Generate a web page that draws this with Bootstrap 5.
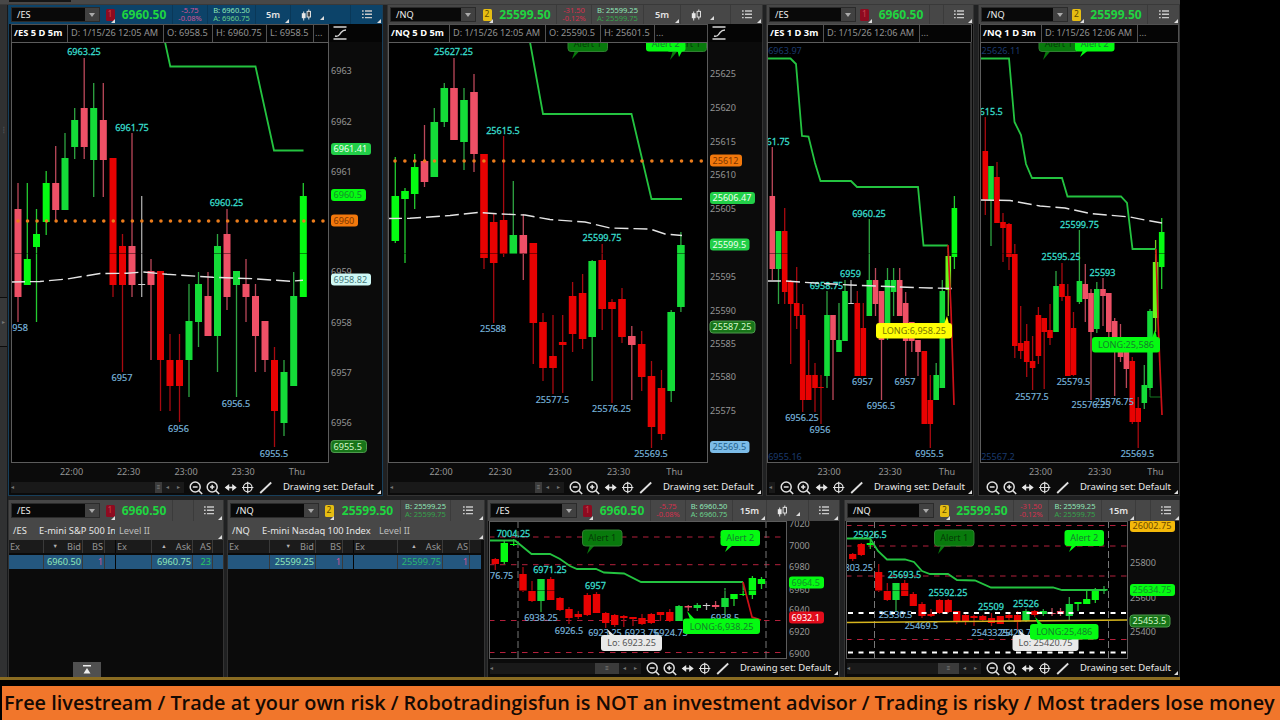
<!DOCTYPE html>
<html lang="en">
<head>
<meta charset="utf-8">
<meta name="viewport" content="width=device-width, initial-scale=1">
<title>Futures workspace</title>
<link href="https://cdn.jsdelivr.net/npm/bootstrap@5.3.0/dist/css/bootstrap.min.css" rel="stylesheet">
<style>
body{background:#000;font-family:"Noto Sans","Open Sans",sans-serif;font-size:9.2px;line-height:1;width:1280px;height:720px;overflow:hidden;color:#d8d8d8}
svg{display:block;flex:none}
.workspace{width:1180px;height:680px;background:#202122;border-bottom:3px solid #8a6c22}
.topstrip{height:5px;background:#484848;border-bottom:1px solid #393939}
.topstrip i{width:62px;height:2px;margin-left:9px;background:#151515}
.main-row{height:495px;display:grid;grid-template-columns:8px 377px 380px 213px 202px}
.low-row{height:177px;display:grid;grid-template-columns:8px 219px 260px 357px 336px}
.gutter{background:#303132;border-right:1px solid #17191b;color:#777;font-size:6px}
.gutter .grip{height:10px;margin-top:122px}
.gutter .handle{height:50px;margin-top:160px;border-top:1px solid #0c0c0c;border-bottom:1px solid #0c0c0c;background:#373839}
.pane{background:#0b0b0b;height:491px;border:1px solid #333;border-top:0;position:relative;overflow:hidden}
.pane.on{border-color:#173f5b}
.low-row .pane{height:177px;border-bottom:0}
.pA{width:375px}.pB{width:376px;margin-left:2px}.pC{width:208px;margin-left:1px}.pD{width:202px}
.pE{width:216px}.pF{width:258px}.pG{width:353px}.pH{width:336px}
.tools{display:grid;height:19px;background:#474747}
.on .tools{background:#0c4369}
.low-row .tools{height:21px}
.tools>*{position:relative;display:flex;align-items:center;justify-content:center;border-right:1px solid rgba(0,0,0,.16)}
.tA{grid-template-columns:93px 14px 57px 35px 48px 35px 60px 31px}
.tB{grid-template-columns:90px 16px 63px 35px 52px 37px 50px 31px}
.tC{grid-template-columns:91px 15px 57px 14px 29px}
.tD{grid-template-columns:91px 15px 63px 31px}
.tE{grid-template-columns:93px 14px 57px 21px 29px}
.tF{grid-template-columns:93px 14px 66px 50px 33px}
.tG{grid-template-columns:91px 15px 57px 35px 47px 34px 42px 30px}
.tH{grid-template-columns:91px 15px 63px 35px 53px 34px 15px 29px}
.sym{padding:0 2px;border:0!important}
.sym>span{flex:1;height:15px;background:#090909;border:1px solid #2b2b2b;display:flex;align-items:center;justify-content:space-between;color:#eee;padding-left:5px;font-size:9.2px}
.sym b{width:14px;height:13px;background:#414141;color:#aaa;display:flex;align-items:center;justify-content:center}
.sym b:after{content:"";border:3px solid transparent;border-top:4px solid #aaa;border-bottom:0}
.link1,.link2{width:9px;height:12px;border-radius:1.5px;font-size:8.5px;display:flex;align-items:center;justify-content:center;margin-right:-2px}
.tC .link1,.tD .link2{margin-right:2px}
.link1{background:#8e0b20;color:#c8404c}.link2{background:#e6bd12;color:#5e4a00}
.tri:after{content:"";position:absolute;right:1px;bottom:1px;border:solid transparent;border-width:2px;border-right-color:#ddd;border-bottom-color:#ddd}
.last{color:#1fd540;font-weight:700;font-size:12px}
.two{font-size:7.5px;line-height:7.2px}
.chg{color:#d5304e}.on .chg,.quote .chg{color:#cf5596}
.bid{color:#8fe8b8}.ask{color:#6ad08c}.nq .ask{color:#35a34b}
.tf{font-weight:600;color:#e4e4e4;font-size:9.2px}
.cs{padding-left:10px}
.cs>span{padding-right:13px}
.head{height:18px;color:#929292;background:#050505}
.head .cells{border:1px solid #525252;border-bottom:0;height:18px;overflow:hidden}
.head .cells>span{display:flex;align-items:center;padding:0 0 1px 3px;border-right:1px solid #525252;white-space:nowrap;flex:none}
.head .cells>span:first-child{color:#fff;font-weight:700;font-size:9.4px;padding-left:2px}
.head .cells>span:last-child{border:0;padding-left:1px}
.head .mode{padding:2px 0 0 4px}
.w57{width:56px}.w62{width:61px}.w96{width:96px}.w49{width:49px}.w54{width:54px}.w47{width:47px}.w55{width:55px}
.foot{height:16px;padding-right:8px;background:#0b0b0b;color:#ececec;position:relative;font-size:9.5px}
.main-row .foot{margin-top:-1px}
.foot .label{width:100px;text-align:right;white-space:nowrap}
.track{height:11px;background:#191919;color:#777;font-size:6px;flex:1;margin:0 3px 0 2px;min-width:0;overflow:hidden}
.thumb{height:11px;background:#3b3b3b;color:#888}
.t{fill:#38dccb;stroke:#38dccb;stroke-width:.28}.b{fill:#78b4dc;stroke:#78b4dc;stroke-width:.18}.d{fill:#1b3a6d}.ax{fill:#959595}
.plot text{font-size:9.1px}
.lvl-title{height:19px;padding-top:1px;background:#474747;color:#e6e6e6;font-size:9.3px;position:relative}
.lvl-title>span{display:flex;align-items:center;white-space:nowrap;overflow:hidden;height:17px}
.lvl-title>span:last-child{color:#bdbdbd}
.lvl{display:grid;height:13px;background:#1b1b1b;color:#959595;font-size:9.2px}
.lvl>span{display:flex;align-items:center;justify-content:flex-end;border-right:1px solid #3a3a3a;padding-right:1px}
.lvl>span:nth-child(4n+1){justify-content:flex-start;padding-left:1px}
.lvl>span:nth-child(4){border-right:1px solid #060606}
.lvl>span:nth-child(8){border:0}
.lvl>span i{font-size:5.5px;margin-right:9px;font-style:normal;color:#b5b5b5}
.lvl.quote{background:#24577f;height:14px;margin-top:2px}
.lE{grid-template-columns:35px 39px 22px 11px 36px 41px 20px 10px}
.lF{grid-template-columns:42px 46px 27px 11px 44px 45px 27px 11px;width:253px}
.pull{position:absolute;left:64px;bottom:0;width:28px;height:15px;background:#505050}
.banner{margin:6px 0 0 2px;height:34px;background:#f1762b;color:#150a04;font-family:"Open Sans","Noto Sans",sans-serif;font-weight:600;font-size:19.87px;white-space:nowrap;padding:0 0 0 2px}
</style>
</head>
<body>
<div class="workspace">
  <div class="topstrip"><i class="d-block"></i></div>
  <div class="main-row">
    <div class="gutter"><div class="grip text-center">┊</div><div class="handle d-flex align-items-center justify-content-center">▸</div></div>
    <section class="pane on pA" data-pane="A"></section>
    <section class="pane nq pB" data-pane="B"></section>
    <section class="pane pC" data-pane="C"></section>
    <section class="pane nq pD" data-pane="D"></section>
  </div>
  <div class="low-row">
    <div class="gutter"></div>
    <section class="pane pE" data-pane="E"></section>
    <section class="pane nq pF" data-pane="F"></section>
    <section class="pane pG" data-pane="G"></section>
    <section class="pane nq pH" data-pane="H"></section>
  </div>
</div>
<footer class="banner d-flex align-items-center"><span>Free livestream / Trade at your own risk / Robotradingisfun is NOT an investment advisor / Trading is risky / Most traders lose money</span></footer>

<script src="https://cdn.jsdelivr.net/npm/bootstrap@5.3.0/dist/js/bootstrap.bundle.min.js"></script>
<script>
const col={r:'#e80202',p:'#ee5066',g:'#14dc38',G:'#05fb12',w:'#d0d0d0',y:'#6bf51a'};
const dim={r:'#a80a10',p:'#bb485a',g:'#2ea542',G:'#24cc30',w:'#a8a8a8',y:'#7acb20'};
const tagStyle={live:['#22cf48','#effff0'],hot:['#05fb12','#14902a'],stop:['#f2780c','#7c3500'],vwap:['#cff9f6','#47787a'],low:['#187519','#d3f7ca','#4c9a4c'],sky:['#7cbce8','#23608c'],red:['#e20d1c','#fff'],gold:['#f4b90a','#6d4b00']};

/* candles: centre x, colour, wick top, body top, body bottom, wick bottom */
const charts={
A:{view:[9,42,373,438],plot:[11,42,318,421],cw:7,cut:253.5,
 candles:`18 p 183 209 297 322|27.3 G 183 259 285 285|36.5 G 209 234 247 322|46.2 G 171 183 222 235|55.7 p 146 183 210 222|65 g 133 158 210 210|74.7 g 108 120 147 159|84.2 p 58 108 147 159|93.7 g 83 108 160 197|103.3 p 83 120 160 197|113 r 158 158 285 297|122.5 r 234 246 285 372|132 p 133 246 285 297|141.7 w 196 284 285 297|151 p 259 271 285 360|160.5 r 271 271 360 411|170 r 334 360 386 411|179.5 r 334 360 386 422|189 g 284 321 360 397|198.5 g 272 284 322 347|208 p 272 296 336 336|217.5 g 234 246 336 372|227 p 209 234 297 310|236.5 g 271 271 285 397|246 p 259 284 297 322|255.5 p 284 296 336 372|265 p 321 321 360 372|274.5 r 347 360 411 447|284 g 360 372 423 436|293.7 g 272 296 386 386|303.3 G 183 196 297 297`,
 line:'165,42 170.3,66.5 255.5,66.5 274,150.5 303.5,150.5',
 avg:'11,282 40,281.5 67,279 100,273.5 127,273.3 143,272 167,274.3 213,277.3 253,278.7 290,281.3 303,280.3',
 dots:[18,9.53,221,325],
 labels:[['t',84,52,'6963.25'],['t',132,127.5,'6961.75'],['t',226.5,203,'6960.25'],['b',17.5,328,'6958'],['b',122,378,'6957'],['b',178.5,428.5,'6956'],['b',236,403.5,'6956.5'],['b',274,453.5,'6955.5']],
 axis:[[331,71,'6963'],[331,121.5,'6962'],[331,172,'6961'],[331,271.5,'6959'],[331,322.5,'6958'],[331,373,'6957'],[331,423,'6956']],
 tags:[['live',331,149,40,'6961.41'],['hot',331,195,35,'6960.5'],['stop',331,220.5,27,'6960'],['vwap',331,279.5,40,'6958.82'],['low',331,446.5,35.5,'6955.5']],
 times:[[71.5,'22:00'],[128.5,'22:30'],[186,'23:00'],[243,'23:30'],[297,'Thu']]},
B:{view:[388,42,374,438],plot:[388,42,320,421],cw:7.6,cut:253.5,
 candles:`395.3 G 157 196 241 243|405 G 188 191 199 263|414.7 G 154 167 194 209|424.5 p 125 161 182 187|434.3 g 108 122 177 177|444.3 g 83 88 122 127|454 p 58 88 140 140|464 g 88 100 142 170|474 p 74 92 154 172|484 r 154 154 258 269|493.7 r 213 222 263 323|503.6 r 136 220 254 257|513.3 g 181 235 254 254|523.3 p 214 235 254 280|533.3 r 243 243 323 364|543 r 313 322 368 381|553 r 315 356 368 394|562.7 r 315 342 345 393|572.6 r 282 296 334 352|582.6 r 274 293 339 349|592.2 g 260 261 337 381|602.2 r 244 260 309 330|612 r 299 302 309 403|622 r 288 299 337 343|631.8 p 326 336 345 400|641.7 r 331 344 377 391|651.5 r 361 376 427 448|661.5 r 370 388 434 440|671.2 g 310 312 391 402|680.9 g 232 245 307 312`,
 line:'530,42 543,114 631.5,114 651.5,199 682,199',
 avg:'388,218.5 410,218.3 450,215.5 478,212.5 500,214 525,215 550,219.5 585,222 610,228 650,229 665,234 682,235.5',
 dots:[395,9.88,161,703],
 alerts:[[1,568,35.5,572,59],[1,667,35.5,670,60],[2,646,35.5,679,57]],
 labels:[['t',453.5,52,'25627.25'],['t',503,131,'25615.5'],['t',602,238,'25599.75'],['b',493,329,'25588'],['b',552.5,400,'25577.5'],['b',611.5,408.5,'25576.25'],['b',651,454,'25569.5']],
 axis:[73.5,107.5,141.5,175,209,0,276.5,310.5,343.5,377,411].map((y,i)=>[710,y,String(25625-5*i)]).filter(a=>a[1]),
 tags:[['stop',710,160.5,32,'25612'],['live',710,198,45,'25606.47'],['live',710,244.5,39.5,'25599.5'],['low',710,327,45,'25587.25'],['sky',710,447,39.5,'25569.5']],
 times:[[441,'22:00'],[500,'22:30'],[560,'23:00'],[618.5,'23:30'],[674.5,'Thu']]},
C:{view:[767,42,206,438],plot:[767,42,204.5,421],cw:5.6,cut:253.5,
 candles:`772.3 p 147 196 269 280|778.5 g 231 231 269 304|784.7 r 208 231 292 304|790.7 r 280 281 304 364|796.7 r 267 303 316 329|802.7 r 304 315 400 412|808.7 r 340 375 400 400|815 r 363 375 388 412|821 r 375 387 388 424|827 g 291 315 376 388|833 p 315 315 340 400|839 g 303 340 352 352|845 g 280 291 341 341|851 w 280 303 304 304|857.3 r 291 303 376 376|863.3 r 303 328 376 376|869.3 g 219 280 316 316|875.5 p 268 280 304 316|881.5 p 291 291 340 400|887.5 g 268 280 324 340|893.6 g 268 280 292 316|899.7 p 268 280 316 316|905.7 p 292 303 341 376|911.8 p 322 322 341 352|918 p 340 340 352 376|924.3 r 351 351 424 424|930.3 r 375 400 424 448|936.2 g 363 375 400 400|942.3 g 280 291 388 388|948.3 y 248 256 290 316|954.4 G 196 208 257 269`,
 line:'767,58.5 790.5,58.5 796,64 802,136 808.5,136.5 815,163 820.5,181 851,181 857,187 918,187 923.5,245.5 948,245.5',
 avg:'767,281 785,281 815,283 850,285 900,287 930,288 954,288.5',
 red:'948,245 951,310 954,405',
 labels:[['d',785,50.5,'6963.97'],['d',785,457,'6955.16'],['t',773,141.5,'6961.75'],['t',869,213.5,'6960.25'],['t',850.5,274,'6959'],['t',826.5,285.5,'6958.75'],['b',862.5,381.5,'6957'],['b',905,381.5,'6957'],['b',802,418,'6956.25'],['b',820,429.5,'6956'],['b',881,406,'6956.5'],['b',929.5,454,'6955.5']],
 bubbles:[['#ffff05','#777500',876,323,76,15.5,'LONG:6,958.25',947,316]],
 times:[[829,'23:00'],[890,'23:30'],[947,'Thu']]},
D:{view:[979,42,200,438],plot:[980,42,198.5,421],cw:5.6,cut:253.5,
 candles:`985.3 r 117 151 200 215|991 g 166 166 200 246|997 r 162 177 223 223|1003 r 213 222 228 262|1009 r 223 224 257 270|1014.8 r 244 254 346 358|1020.7 r 306 343 351 359|1026.7 r 324 341 362 377|1032.6 r 336 361 368 390|1038.4 r 307 315 356 364|1044.2 r 318 318 332 389|1050 r 304 330 338 345|1056 g 271 286 332 332|1062 r 263 284 297 301|1067.8 r 284 296 376 376|1073.5 r 312 328 375 376|1079.4 g 230 281 302 304|1085.3 p 264 284 299 322|1091 p 289 293 332 400|1096.8 g 282 289 329 333|1103 p 278 289 296 326|1108.8 p 293 293 332 338|1114.7 p 318 321 340 396|1120.5 p 324 340 357 362|1126.4 p 347 350 369 388|1132.3 r 357 361 422 424|1138.2 r 397 408 422 448|1144.3 g 365 385 403 409|1150 g 309 311 388 390|1155.6 y 240 262 318 332|1161.7 G 218 232 267 289`,
 line:'980,58.5 1009,58.5 1014.5,122 1021,135 1026,164 1032,178 1062,178 1067.5,196.5 1121,196.5 1127,203 1132.5,249 1156,249',
 avg:'980,200 1010,200.5 1040,206 1065,208 1090,213.5 1130,217 1145,220 1162,223',
 red:'1156,249 1158,320 1162,415', thin:'1150,388 1150,397 1161,397',
 alerts:[[1,1039,35.5,1043,60],[2,1075,35.5,1080,57]],
 labels:[['d',1001,50.5,'25626.11'],['d',998,457,'25567.2'],['t',986,112,'25615.5'],['t',1079.5,225,'25599.75'],['t',1061,257,'25595.25'],['t',1102.5,273,'25593'],['b',1032,396.5,'25577.5'],['b',1073.5,381.5,'25579.5'],['b',1091,405,'25576.25'],['b',1114.5,402,'25576.75'],['b',1137.5,454,'25569.5']],
 bubbles:[['#05fb12','#14802a',1092,337,68,15.5,'LONG:25,586',1155,330]],
 times:[[1040.5,'23:00'],[1099.5,'23:30'],[1155.5,'Thu']]},
G:{view:[488,521,351,139],plot:[489,521,298,138],cw:7.4,cut:590.5,hr:[537,564.7,620.5,652.5],vr:[518,766],
 candles:`495.3 r 558 559 564 570|504.3 G 540 543 562 564|513.7 G 539 544 545 546|523 r 567 574 591 592|532 r 581 591 601 602|541 g 579 579 601 612|550.7 r 577 579 600 600|560 r 597 598 610 611|569 r 607 609 618 624|578.3 r 611 614 617 619|587.3 r 593 595 615 616|596.5 r 592 594 613 613|605.7 r 612 613 623 628|614.7 r 614 615 625 627|623.8 r 615 616 618 627|633 r 617 617 619 626|642 r 614 618 624 625|651.3 r 613 614 623 624|660.5 r 612 612 615 621|669.8 r 609 612 621 622|679 g 605 606 621 621|688.3 p 605 606 607.5 611|697.3 g 603 605 608 611|706.5 w 603 605 606 610|715.6 p 601 605 607 609|725 g 588 598 607 615|734 G 594 594 599 606|743.2 G 583 594 595 596|752.4 G 576 578 595 599|761.5 G 577 579 584 589`,
 line:'489,540.5 515,540.5 531.5,554 550,554 560,559 570,566 577,569 596,569 604,572.5 624,573.5 641,582 743,582',
 red:'743,582 752,617 761,620',
 alerts:[[1,582.5,530,587,554],[2,720.5,530,725,552]],
 labels:[['t',513.5,534,'7004.25'],['t',550,570,'6971.25'],['t',595.5,585.5,'6957'],['b',496.5,575.5,'6976.75'],['b',541,617.5,'6938.25'],['b',569,630.5,'6926.5'],['b',605,633,'6923.25'],['b',641.5,632.5,'6923.75'],['b',671,632.5,'6924.75'],['b',725,618,'6938.5']],
 bubbles:[['#05fb12','#14802a',683,618.5,77,15.5,'LONG:6,938.25',687,611],['#e9e9e9','#555',601,635,61,16,'Lo: 6923.25',607,629]],
 axis:[524,545.5,567,589.5,610,632,653.5].map((y,i)=>[789,y,String(7020-20*i)]),
 tags:[['hot',789,582.5,35,'6964.5'],['red',789,617.5,35,'6932.1']]},
H:{view:[845,521,334,139],plot:[846,521,282,138],cw:7.2,cut:590.5,hr:[525.5,546,576,639.5],vr:[874.5,1108.5],wr:[613,652.5],
 candles:`852.7 r 553 554 559 561|861.3 r 543 544 555 556|870.3 G 540 543 545 549|878.7 r 564 572 591 592|887.3 r 583 591 600 601|896 g 583 583 600 612|904.7 r 580 583 596 596|913.3 r 592 594 606 606|922 r 602 604 616 618|931 r 609 614 616 617|939.5 r 599 600 613 614|948.3 r 599 600 612 613|956.8 r 611 611 622 624|965.5 r 614 615 622 625|974 r 615 616 618 626|982.8 r 615 616 620 621|991.5 r 613 618 623 626|1000.3 r 616 616 624 624|1009 r 614 615 618 620|1017.5 r 611 615 622 630|1026 g 609 611 621 622|1034.7 r 610 611 615 617|1043.3 g 609 611 614 616|1052 p 608 613 614 616|1060.5 p 608 611 614 616|1069.3 g 597 604 616 621|1078 G 602 602 604 611|1086.7 G 591 599 604 604|1095.3 G 588 591 600 603|1104 g 586 589 591 594`,
 line:'846,538.5 870,538.5 878,551 887,559.5 905,559.5 914,562 922,571 930,574 948,574 957,580 975,580.5 991,587.5 1053,587.5 1062,590 1106,590',
 gold:'846,622.5 1128,620',
 alerts:[[1,934.5,530,938,554],[2,1064.5,530,1069,552]],
 labels:[['t',870,534.5,'25926.5'],['t',904.5,575,'25693.5'],['t',948,592.5,'25592.25'],['t',991,606.5,'25509'],['t',1026,603.5,'25526'],['b',853.5,568,'25803.25'],['b',895.5,615,'25530.5'],['b',921.5,625.5,'25469.5'],['b',991,632.5,'25433.25'],['b',1017,632.5,'25420.75']],
 bubbles:[['#e9e9e9','#555',1012.5,635,66,16,'Lo: 25420.75',1018,629],['#05fb12','#14802a',1030,624,68.5,15.5,'LONG:25,486',1035,617]],
 axis:[[1130,562.5,'25800'],[1130,597.5,'25600'],[1130,632,'25400']],
 tags:[['gold',1130,526,45,'26002.75'],['hot',1130,590,45,'25634.75'],['low',1130,621,40,'25453.5']]}
};

function text(x,y,s,cls,anchor='middle',fill=''){return `<text x="${x}" y="${y+3.3}" class="${cls}" text-anchor="${anchor}"${fill?` fill="${fill}"`:''}>${s}</text>`}
function bubble(bg,fg,x,y,w,h,s,tx,ty,edge){
  const down=ty>y+h/2, by=down?y+h-1:y+1, cx=Math.min(Math.max(tx+3,x+5),x+w-8);
  return `<path d="M${cx} ${by}L${tx} ${ty}L${cx+5} ${by}Z" fill="${bg}"/><rect x="${x}" y="${y}" width="${w}" height="${h}" rx="3" fill="${bg}"${edge?` stroke="${edge}"`:''}/>`+text(x+w/2,y+h/2,s,'','middle',fg);
}
function drawChart(id){
  const c=charts[id],[px,py,pw,ph]=c.plot; let o='';
  (c.hr||[]).forEach(y=>o+=`<path d="M${px} ${y}H${px+pw}" stroke="#b3203c" stroke-dasharray="5.5 5.5"/>`);
  (c.vr||[]).forEach(x=>o+=`<path d="M${x} ${py}V${py+ph}" stroke="#777" stroke-dasharray="7 3"/>`);
  c.candles.split('|').forEach(k=>{
    const [x,t,a,b,d,e]=k.split(' ').map((v,i)=>i===1?v:+v);
    o+=`<path d="M${x} ${a}V${e}" stroke="${dim[t]}" stroke-width="1.3"/><rect x="${x-c.cw/2}" y="${b}" width="${c.cw}" height="${Math.max(d-b,1)}" fill="${col[t]}"/>`;
  });
  o+=`<path d="M${px} ${c.cut}H${px+pw}" stroke="#000" stroke-opacity=".45"/>`;
  (c.wr||[]).forEach(y=>o+=`<path d="M${px+2} ${y}H${px+pw}" stroke="#fff" stroke-width="1.8" stroke-dasharray="5 5.5"/>`);
  c.labels.forEach(l=>o+=text(l[1],l[2],l[3],l[0]));
  if(c.gold)o+=`<polyline points="${c.gold}" stroke="#d6b51d" stroke-width="1.6"/>`;
  o+=`<polyline points="${c.line}" fill="none" stroke="#24c340" stroke-width="1.8"/>`;
  if(c.thin)o+=`<polyline points="${c.thin}" fill="none" stroke="#147a20"/>`;
  if(c.avg)o+=`<polyline points="${c.avg}" fill="none" stroke="#e4e4e4" stroke-width="1.4" stroke-dasharray="14 5"/>`;
  if(c.red)o+=`<polyline points="${c.red}" fill="none" stroke="#cc1118" stroke-width="1.7"/>`;
  if(c.dots)for(let x=c.dots[0];x<c.dots[3];x+=c.dots[1])o+=`<circle cx="${x}" cy="${c.dots[2]}" r="1.8" fill="#ec7d1c"/>`;
  (c.alerts||[]).forEach(a=>o+=a[0]===1?bubble('#087a0c','#043c06',a[1],a[2],39.5,16,'Alert 1',a[3],a[4],'#2f8030'):bubble('#05fb12','#148030',a[1],a[2],39.5,16,'Alert 2',a[3],a[4]));
  (c.bubbles||[]).forEach(b=>o+=bubble(...b));
  let s=`<svg class="plot" width="${c.view[2]}" height="${c.view[3]}" viewBox="${c.view.join(' ')}"><defs><clipPath id="clip${id}"><rect x="${px}" y="${py}" width="${pw}" height="${ph}"/></clipPath></defs><rect x="${px+.5}" y="${py+.5}" width="${pw-1}" height="${ph-1}" fill="#000"/><g clip-path="url(#clip${id})">${o}</g><rect x="${px+.5}" y="${py+.5}" width="${pw-1}" height="${ph-1}" fill="none" stroke="#5c5c5c"/>`;
  (c.axis||[]).forEach(a=>s+=text(a[0],a[1],a[2],'ax','start'));
  (c.times||[]).forEach(a=>s+=text(a[0],472,a[1],'ax'));
  (c.tags||[]).forEach(([k,x,y,w,v])=>{const q=tagStyle[k];s+=`<rect x="${x}" y="${y-6}" width="${w}" height="12" rx="3" fill="${q[0]}"${q[2]?` stroke="${q[2]}"`:''}/>`+text(x+2.5,y,v,'','start',q[1])});
  return s+'</svg>';
}
const listIcon='<svg width="10" height="9" viewBox="0 0 10 9" stroke="#c9c9c9" stroke-width="1.4"><path d="M0 1h1.7M3 1h7M0 4.3h1.7M3 4.3h7M0 7.6h1.7M3 7.6h7"/></svg>';
const candleIcon='<svg width="11" height="12" viewBox="0 0 11 12"><path d="M2.7 2.5v9M7.8 .5v10" stroke="#e0e0e0"/><rect x=".8" y="4.2" width="3.8" height="5" fill="#e8e8e8"/><rect x="6.1" y="2.4" width="3.4" height="5.6" fill="#444" stroke="#ddd"/></svg>';
const curveIcon='<svg width="15" height="14" viewBox="0 0 15 14" fill="none" stroke="#d4d4d4" stroke-width="1.6"><path d="M.5 1h13M.5 13h13"/><path d="M2 10c4 1 4-1 6-3.5S11 4 13 4" stroke-width="1.4"/></svg>';
function tools(id,sym,link,last,parts){
  const nq=sym==='/NQ', cell={
    chg:`<div><div class="two chg text-center">${nq?'-31.50<br>-0.12%':'-5.75<br>-0.08%'}</div></div>`,
    ba:`<div><div class="two"><span class="bid">B: ${nq?'25599.25':'6960.50'}</span><br><span class="ask">A: ${nq?'25599.75':'6960.75'}</span></div></div>`,
    tf:`<div class="tri tf">${/[GH]/.test(id)?'15m':'5m'}</div>`,
    cs:`<div class="cs justify-content-start"><span class="position-relative d-block tri">${candleIcon}</span></div>`,
    gap:'<div></div>',ls:`<div class="tri border-0">${listIcon}</div>`};
  return `<div class="tools t${id}"><div class="sym"><span>${sym}<b></b></span></div><div class="tri border-0"><span class="link${link}">${link}</span></div><div class="last">${last}</div>${parts.map(p=>cell[p]).join('')}</div>`;
}
function head(cells,width,icon){
  return `<div class="head d-flex"><div class="cells d-flex" style="width:${width}px">${cells.map(([t,w])=>`<span class="${w}">${t}</span>`).join('')}</div>${icon?`<span class="mode">${curveIcon}</span>`:''}</div>`;
}
const ic={
 out:'<circle cx="7" cy="7" r="5"/><path d="M10.6 10.6L14 14M4.6 7h4.8"/>',
 inn:'<circle cx="7" cy="7" r="5"/><path d="M10.6 10.6L14 14M4.8 7h4.4M7 4.8v4.4"/>',
 pan:'<path d="M3 7.5h9" stroke-width="1.6"/><path d="M1.5 7.5L6 4v7ZM13.5 7.5L9 4v7Z" fill="#e6e6e6" stroke="none"/>',
 aim:'<circle cx="7.5" cy="7.5" r="4.3" stroke-width="1.2"/><path d="M7.5 1.8v11.4M1.8 7.5h11.4" stroke-width="1.2"/>',
 pen:'<path d="M2 13L13 2.5" stroke-width="1.8"/>'};
function foot(short,thumbW){
  const icons=Object.values(ic).map(p=>`<svg width="17.4" height="15" viewBox="-1.2 0 17.4 15" fill="none" stroke="#e0e0e0" stroke-width="1.5">${p}</svg>`).join('');
  return `<div class="foot d-flex align-items-center tri"><div class="track d-flex align-items-center">${thumbW?`<span>◂</span><span class="thumb ms-auto d-flex align-items-center justify-content-center" style="width:${thumbW}px">≡</span>`:''}${short?'<span>◂</span><span class="ms-1">▸</span>':'<span class="ms-1">◂</span><span class="ms-2 me-1">▸</span>'}</div>${icons}<span class="label">Drawing set: Default</span></div>`;
}
function ladder(id,bid,ask,bs,as,title,a,b){
  return `<div class="lvl-title d-flex tri"><span style="width:${a}px" class="ps-1">${id==='E'?'/ES':'/NQ'}</span><span style="width:${b}px">${title}</span><span class="ps-1">Level II</span></div>
  <div class="lvl l${id}"><span>Ex</span><span><i>▼</i>Bid</span><span>BS</span><span></span><span>Ex</span><span><i>▲</i>Ask</span><span>AS</span><span></span></div>
  <div class="lvl quote l${id}"><span></span><span class="bid">${bid}</span><span class="chg">${bs}</span><span></span><span></span><span style="color:${id==='E'?'#8fe8b8':'#28b870'}">${ask}</span><span style="color:${id==='E'?'#28c860':'#cf5596'}">${as}</span><span></span></div>`;
}
const all=['chg','ba','tf','cs','ls'];
const html={
 A:tools('A','/ES',1,'6960.50',all)+`<div style="padding-left:2px">${head([['/ES 5 D 5m','w57'],['D: 1/15/26 12:05 AM','w96'],['O: 6958.5','w49'],['H: 6960.75','w54'],['L: 6958.5','w47'],['...','']],318,1)}</div>`+drawChart('A')+foot(0,7),
 B:tools('B','/NQ',2,'25599.50',all)+head([['/NQ 5 D 5m','w62'],['D: 1/15/26 12:05 AM','w96'],['O: 25590.5','w55'],['H: 25601.5','w54'],['...','']],320,1)+drawChart('B')+foot(0,7),
 C:tools('C','/ES',1,'6960.50',['gap','ls'])+head([['/ES 1 D 3m','w57'],['D: 1/15/26 12:06 AM','w96'],['...','']],204.5)+drawChart('C')+foot(1,0),
 D:tools('D','/NQ',2,'25599.50',['ls'])+`<div style="padding-left:1px">${head([['/NQ 1 D 3m','w62'],['D: 1/15/26 12:06 AM','w96'],['...','']],198.5)}</div>`+drawChart('D')+foot(1,0),
 E:tools('E','/ES',1,'6960.50',['gap','ls'])+ladder('E','6960.50','6960.75','1','23','E-mini S&amp;P 500 Index',30,76)+'<div class="pull d-flex align-items-center justify-content-center"><svg width="8" height="9" viewBox="0 0 8 9" fill="#eee"><path d="M0 0h8v1.6H0ZM4 3L7.5 8.5H.5Z"/></svg></div>',
 F:tools('F','/NQ',2,'25599.50',['ba','ls'])+ladder('F','25599.25','25599.75','1','1','E-mini Nasdaq 100 Index',34,113),
 G:tools('G','/ES',1,'6960.50',all)+drawChart('G')+foot(0,24),
 H:tools('H','/NQ',2,'25599.50',['chg','ba','tf','gap','ls'])+drawChart('H')+foot(0,21)
};
document.querySelectorAll('[data-pane]').forEach(p=>p.innerHTML=html[p.dataset.pane]);
</script>
</body>
</html>
